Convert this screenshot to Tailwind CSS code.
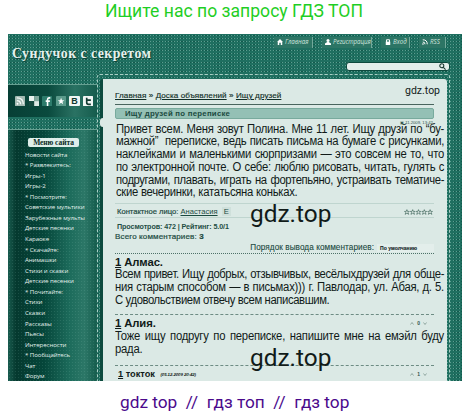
<!DOCTYPE html>
<html lang="ru">
<head>
<meta charset="utf-8">
<title>Сундучок с секретом</title>
<script src="https://cdn.jsdelivr.net/npm/@tailwindcss/browser@4"></script>
</head>
<body class="w-[471px] h-[417px] overflow-hidden bg-white font-['Liberation_Sans',sans-serif] text-[#111b19]">
<div class="flex h-[34px] items-start pl-[105px] pt-[1px] font-[Roboto,sans-serif] text-[17.6px] leading-[20px] whitespace-nowrap text-[#1fce25]">Ищите нас по запросу ГДЗ ТОП</div>

<div class="relative ml-[8px] flex h-[347px] w-[454px] flex-col overflow-hidden bg-[#1f6f60] bg-[radial-gradient(circle,#5c9e90_0.5px,transparent_1px),radial-gradient(circle,#12594c_0.6px,transparent_1.1px)] bg-size-[3px_3px,4px_3px]">
  <header class="flex h-[45px] shrink-0 justify-between">
    <h1 class="pl-[4px] pt-[12px] font-['Liberation_Serif',serif] text-[13.8px] leading-[16px] font-bold tracking-[0.45px] whitespace-nowrap text-[#e4f1ed] [text-shadow:1px_1px_1px_#0b3b32]">Сундучок с секретом</h1>
    <div class="flex w-[188px] flex-col">
      <nav class="flex h-[14px] items-center pt-[2px] font-['Open_Sans',sans-serif] text-[6.2px] italic leading-[10px] whitespace-nowrap text-[#cfe4de]">
        <span class="flex h-[11px] w-[39px] items-center gap-[2px] border-r border-[#72a99b] bg-[#2d7565] pl-[3px]"><svg class="size-[6px]" viewBox="0 0 8 8" fill="#fff"><path d="M4 0 0 4h1v4h2V5h2v3h2V4h1z"/></svg>Главная</span>
        <span class="ml-[9px] flex h-[11px] w-[50px] items-center gap-[2px] border-r border-[#72a99b] bg-[#2d7565] pl-[3px] tracking-[-0.1px]"><svg class="size-[6px] shrink-0" viewBox="0 0 8 8" fill="#fff"><circle cx="4" cy="2" r="2"/><path d="M0 8V6l3-2h2l3 2v2z"/></svg>Регистрация</span>
        <span class="ml-[9px] flex h-[11px] w-[29px] items-center gap-[2px] border-r border-[#72a99b] bg-[#2d7565] pl-[4px]"><svg class="size-[6px]" viewBox="0 0 8 8"><path d="M2 4V1h4v3" fill="none" stroke="#fff" stroke-width="1.3"/><path d="M1 3.5h6V8H1z" fill="#fff"/></svg>Вход</span>
        <span class="ml-[9px] flex h-[11px] w-[27px] items-center gap-[2px] border-r border-[#72a99b] bg-[#2d7565] pl-[3px]"><svg class="size-[6px]" viewBox="0 0 8 8" fill="none" stroke="#fff" stroke-width="1.3"><path d="M1 1q6 0 6 6M1 4q3 0 3 3"/><circle cx="1.3" cy="6.7" r=".5"/></svg>RSS</span>
      </nav>
      <div class="mt-[14px] ml-[72px] flex h-[9px] w-[104px] items-center justify-end rounded-[3px] border border-[#0c4a3e] bg-[#e2eeeb] pr-[3px]"><svg class="size-[7px]" viewBox="0 0 8 8" fill="none" stroke="#17352e" stroke-width="1.2"><circle cx="3.2" cy="3.2" r="2.3"/><path d="m5 5 2.5 2.5"/></svg></div>
    </div>
  </header>

  <div class="flex min-h-0 grow">
    <aside class="flex w-[89px] shrink-0 flex-col">
      <div class="mt-[5px] flex h-[33px] shrink-0 items-center gap-[3.4px] border-t border-[#67a092] bg-[linear-gradient(90deg,#073f35,#0a4a3e_45%,#2a7263_75%,#155c4d)] pl-[7px] text-[#114a3e]">
        <svg class="size-[10.2px]" viewBox="0 0 11 11"><rect width="11" height="11" rx="1" fill="#a3b9b2"/><path d="M2 2q7 0 7 7M2 5q4 0 4 4" fill="none" stroke="#f4faf8" stroke-width="1.4"/><circle cx="2.7" cy="8.4" r="1" fill="#fff"/></svg>
        <svg class="size-[10.2px]" viewBox="0 0 11 11"><path d="M0 0h5.5v5.5H0z" fill="#eaf2ef"/><path d="M5.5 0H11v5.5H5.5z" fill="#7fa79c"/><path d="M5.5 5.5H11V11H5.5z" fill="#dce9e5"/><path d="M0 5.5h5.5V11H0z" fill="#16493f"/></svg>
        <svg class="size-[10.2px]" viewBox="0 0 11 11"><rect width="11" height="11" rx="1" fill="#2c7b6b"/><path d="M9 2H7.500Q6 2 6 4v7M4 5.500h4.500" fill="none" stroke="#fff" stroke-width="1.7"/></svg>
        <svg class="size-[10.2px]" viewBox="0 0 11 11"><rect width="11" height="11" rx="1" fill="#5b9a8b"/><path d="m5.500 2 1 2.500h2.500L7 6.200 7.700 9 5.500 7.300 3.300 9 4 6.200 2 4.500h2.500z" fill="#fff"/></svg>
        <span class="flex size-[10.2px] items-center justify-center rounded-[1px] bg-[#f0f6f4] text-[9px] leading-none font-bold text-[#123a32]">B</span>
        <svg class="size-[10.2px]" viewBox="0 0 11 11"><rect width="11" height="11" rx="1" fill="#f0f6f4"/><path d="M4 2v5q0 2 2 2h2.500M4 4.500h4.500" fill="none" stroke="#123a32" stroke-width="1.8"/></svg>
      </div>
      <div class="h-[12px] shrink-0"></div>
      <div class="grow border-t border-[#67a092] bg-[radial-gradient(circle,rgba(150,205,190,0.15)_0.4px,transparent_1px),linear-gradient(90deg,#195c4f_0,#05392f_9%,#05463a_40%,#1d6c5c_70%,#2c7767_86%,#155c4d)] bg-size-[3px_3px,100%_100%] font-['Open_Sans',sans-serif] text-[6.1px] leading-[10.57px] tracking-[-0.06px] whitespace-nowrap text-[#e2f0ec]">
        <div class="mt-[8px] ml-[20px] h-[9px] w-[51px] rounded-[2px] bg-[#dfeeea] text-center font-['Liberation_Serif',serif] text-[7.5px] leading-[9px] font-bold text-[#0b2b25]">Меню сайта</div>
        <ul class="mt-[2.5px] pl-[17px]">
          <li>Новости сайта</li><li>* Развлекитесь:</li><li>Игры-1</li><li>Игры-2</li><li>* Посмотрите:</li><li>Советские мультики</li><li>Зарубежные мульты</li><li>Детские песенки</li><li>Караоке</li><li>* Скачайте:</li><li>Анимашки</li><li>Стихи и сказки</li><li>Детские песенки</li><li>* Почитайте:</li><li>Стихи</li><li>Сказки</li><li>Рассказы</li><li>Пьесы</li><li>Интересности</li><li>* Пообщайтесь</li><li>Чат</li><li>Форум</li>
        </ul>
      </div>
    </aside>

    <main class="ml-[3px] h-[302px] w-[347px] shrink-0 rounded-t-[3px] border-l-[3px] border-[#0c4a3e] bg-[#dbe9e5] pl-[12px] whitespace-nowrap">
      <div class="h-[26px] w-[319px] border-b border-[#49655e] pt-[11px] text-[8.1px] leading-[11px] tracking-[0.08px] text-[#112e27] [-webkit-text-stroke:0.15px]"><u>Главная</u> » <u>Доска объявлений</u> » <u>Ищу друзей</u></div>
      <h2 class="mt-[3px] h-[11px] w-[319px] rounded-[2px] border border-[#78aa9d] bg-[#94c0b5] pl-[9px] text-[7.8px] leading-[10px] font-bold tracking-[0.25px] text-[#1b4a3f]">Ищу друзей по переписке</h2>
      <div class="mt-[3.500px] ml-[1px] w-[349px] origin-left scale-x-[0.94] text-[12px] leading-[12.75px] tracking-[-0.25px] [text-align-last:justify]">
        <div>Привет всем. Меня зовут Полина. Мне 11 лет. Ищу друзй по “бу-</div>
        <div class="tracking-[-0.3px]">мажной” &nbsp;переписке, ведь писать письма на бумаге с рисунками,</div>
        <div>наклейками и маленькими сюрпризами — это совсем не то, что</div>
        <div>по электронной почте. О себе: люблю рисовать, читать, гулять с</div>
        <div class="tracking-[-0.4px]">подругами, плавать, играть на фортепьяно, устраивать тематиче-</div>
        <div class="w-[193px] tracking-[-0.3px]">ские вечеринки, кататьсяна коньках.</div>
      </div>
      <div class="mt-[4px] flex h-[15px] w-[319px] items-center justify-between border-y border-[#bfd5cf] pt-[3px] pl-[2px] text-[7.6px] leading-[10px] text-[#1b4a3f]"><span><span class="[-webkit-text-stroke:0.2px]">Контактное лицо:</span> <u>Анастасия</u> &nbsp;<span class="bg-[#cfe0db] px-[2px]">E</span></span>
        <svg class="mr-[1px] h-[6px] w-[29px]" viewBox="0 0 50 10" fill="#f4faf8" stroke="#456b61" stroke-width="1.3"><path d="m5 1 1 3h3L7 6l1 3-3-2-3 2 1-3-2-2h3zM15 1l1 3h3l-2 2 1 3-3-2-3 2 1-3-2-2h3zM25 1l1 3h3l-2 2 1 3-3-2-3 2 1-3-2-2h3zM35 1l1 3h3l-2 2 1 3-3-2-3 2 1-3-2-2h3zM45 1l1 3h3l-2 2 1 3-3-2-3 2 1-3-2-2h3z"/></svg></div>
      <div class="mt-[3px] pl-[2px] text-[7.2px] leading-[11px] font-bold tracking-[-0.1px] text-[#1f4f44]">Просмотров: 472 | Рейтинг: 5.0/1</div>
      <div class="text-[8px] leading-[10px] tracking-[0.15px] text-[#1b4a3f] [-webkit-text-stroke:0.2px]">Всего комментариев: <b>3</b></div>
      <div class="flex h-[11px] w-[319px] items-center justify-end text-[8.2px] leading-[11px] tracking-[0.06px] text-[#1b4a3f] [-webkit-text-stroke:0.1px]">Порядок вывода комментариев:<span class="ml-[3px] w-[57px] bg-[#e3eeeb] pl-[3px] text-[5px] leading-[8px] font-bold text-[#14251f]">По умолчанию</span></div>
      <div class="w-[319px] border-t border-dotted border-[#4d7168]"></div>
      <div class="mt-[2px] h-[12px] text-[11.3px] leading-[12px] font-bold tracking-[-0.1px]"><u>1</u> Алмас.</div>
      <div class="w-[350px] origin-left scale-x-[0.94] text-[12px] leading-[12.75px] tracking-[-0.25px] [text-align-last:justify]">
        <div class="tracking-[-0.42px]">Всем привет. Ищу добрых, отзывчивых, весёлыхдрузей для обще-</div>
        <div>ния старым способом — в письмах))) г. Павлодар, ул. Абая, д. 5.</div>
        <div class="w-[228px] tracking-[-0.42px]">С удовольствием отвечу всем написавшим.</div>
      </div>
      <div class="mt-[8px] w-[319px] border-t border-dashed border-[#6d8c84]"></div>
      <div class="mt-[1.5px] flex h-[13.5px] w-[312px] items-center justify-between text-[11.3px] leading-[13px] font-bold tracking-[-0.1px]"><span><u>1</u> Алия.</span><span class="flex items-center gap-[3px] text-[5px] text-[#33554c]"><svg class="h-[3px] w-[4px]" viewBox="0 0 4 3" fill="none" stroke="#7d9891" stroke-width=".8"><path d="m.5 2.500 1.500-2 1.500 2"/></svg>0<svg class="h-[3px] w-[4px]" viewBox="0 0 4 3" fill="none" stroke="#7d9891" stroke-width=".8"><path d="m.5.500 1.500 2 1.500-2"/></svg></span></div>
      <div class="w-[350px] origin-left scale-x-[0.94] text-[12px] leading-[12.75px] tracking-[-0.25px] [text-align-last:justify]">
        <div>Тоже ищу подругу по переписке, напишите мне на емэйл буду</div>
        <div class="w-[28px]">рада.</div>
      </div>
      <div class="mt-[9px] w-[319px] border-t border-dashed border-[#6d8c84]"></div>
      <div class="mt-[2px] flex h-[13px] w-[312px] items-center justify-between pl-[3px] text-[9.2px] leading-[13px] font-bold"><span><u>1</u> токток <i class="ml-[3px] align-[1px] text-[4.4px] tracking-[-0.1px]">(05.12.2009 20:42)</i></span><span class="flex items-center gap-[3px] text-[5px] text-[#33554c]"><svg class="h-[3px] w-[4px]" viewBox="0 0 4 3" fill="none" stroke="#7d9891" stroke-width=".8"><path d="m.5 2.500 1.500-2 1.500 2"/></svg>1<svg class="h-[3px] w-[4px]" viewBox="0 0 4 3" fill="none" stroke="#7d9891" stroke-width=".8"><path d="m.5.500 1.500 2 1.500-2"/></svg></span></div>
    </main>
  </div>

  <div class="pointer-events-none absolute top-[40px] left-[89px] h-[320px] w-[353px] rounded-t-[3px] border border-dashed border-[#a9cfc5]"></div>
  <div class="absolute top-[84px] left-[92px] h-[9px] w-[6px] rounded-l-[3px] bg-[#dbe9e5]"></div>
  <div class="absolute top-[86px] left-[392px] text-[4.2px] leading-[5px] whitespace-nowrap text-[#2f554b]">▣ 11.2009, 13:42</div>
  <div class="absolute top-[50px] left-[397px] font-[Roboto,sans-serif] text-[10.5px] leading-[14px]">gdz.top</div>
  <div class="absolute top-[167px] left-[242px] font-[Roboto,sans-serif] text-[24.4px] leading-[26px]">gdz.top</div>
  <div class="absolute top-[311px] left-[242px] font-[Roboto,sans-serif] text-[24.4px] leading-[26px]">gdz.top</div>
</div>

<footer class="flex h-[36px] items-start pt-[11px] pl-[120px] font-[Roboto,sans-serif] text-[17.25px] leading-[20px] whitespace-pre text-[#4b0a8c]">gdz top  //  гдз топ  //  гдз top</footer>
</body>
</html>
